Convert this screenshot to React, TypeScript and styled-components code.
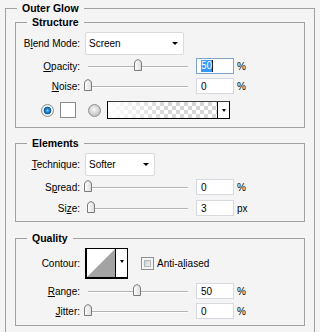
import React from 'react';
import styled, { createGlobalStyle } from 'styled-components';

const Global = createGlobalStyle`
  html, body { margin: 0; padding: 0; background: #f4f4f4; }
  body {
    font-family: "Liberation Sans", Arial, sans-serif;
    font-size: 10px;
    color: #000;
  }
  #root { padding: 2px 0 0 5px; }
`;

const Group = styled.fieldset<{ $outer?: boolean; $mt?: number; $pb?: number }>`
  box-sizing: border-box;
  width: ${(p) => (p.$outer ? '310px' : 'auto')};
  margin: ${(p) => p.$mt ?? 0}px ${(p) => (p.$outer ? 0 : 9)}px 0;
  padding: 0 0 ${(p) => p.$pb ?? 0}px;
  border: 1px solid #a0a0a0;
  min-width: 0;
`;

const Legend = styled.legend`
  margin-left: 11px;
  padding: 0 5px;
  font-weight: bold;
  font-size: 10.5px;
  line-height: 13px;
`;

const Row = styled.div<{ $h: number; $mt: number }>`
  display: flex;
  align-items: center;
  height: ${(p) => p.$h}px;
  margin-top: ${(p) => p.$mt}px;
`;

const Label = styled.span`
  flex: none;
  width: 64px;
  margin-right: 5px;
  text-align: right;
  white-space: nowrap;
`;

const U = styled.span`
  text-decoration: underline;
`;

const Select = styled.div<{ $w: number }>`
  box-sizing: border-box;
  width: ${(p) => p.$w}px;
  height: 23px;
  background: #fff;
  border: 1px solid #dadada;
  border-radius: 2px;
  display: flex;
  align-items: center;
  justify-content: space-between;
  padding: 0 5px 0 3px;
`;

const Arrow = styled.span<{ $w?: number }>`
  width: 0;
  height: 0;
  border-left: ${(p) => (p.$w ?? 6) / 2}px solid transparent;
  border-right: ${(p) => (p.$w ?? 6) / 2}px solid transparent;
  border-top: 3px solid #000;
`;

const SliderBox = styled.div`
  position: relative;
  flex: none;
  width: 107px;
  height: 16px;
  display: flex;
  align-items: center;
`;

const Track = styled.div`
  box-sizing: border-box;
  width: 100px;
  height: 2px;
  margin: 2px 0 0 3px;
  border-top: 1px solid #b4b4b4;
  background: #fdfdfd;
`;

const ThumbSvg = styled.svg`
  position: absolute;
  top: 1px;
`;

const Field = styled.div<{ $focus?: boolean }>`
  box-sizing: border-box;
  flex: none;
  width: 38px;
  height: 16px;
  margin-left: 4px;
  padding-left: 4px;
  background: #fff;
  border: 1px solid ${(p) => (p.$focus ? '#7da2ce' : '#d6d9df')};
  display: flex;
  align-items: center;
`;

const Selected = styled.span`
  background: #3399ff;
  color: #fff;
  line-height: 12px;
  border-right: 1px solid #1a1a1a;
`;

const Unit = styled.span`
  margin-left: 3px;
`;

const Radio = styled.span<{ $on?: boolean; $ml: number }>`
  box-sizing: border-box;
  flex: none;
  width: 13px;
  height: 13px;
  margin-left: ${(p) => p.$ml}px;
  border-radius: 50%;
  border: 1px solid #8f8f8f;
  background: ${(p) =>
    p.$on
      ? 'radial-gradient(circle at 50% 50%, #8fd4fa 0, #2a8fd6 1.5px, #0d5596 3.5px, #f2f2f2 4.2px, #dedede 100%)'
      : 'radial-gradient(circle at 45% 40%, #fbfbfb 0, #e0e0e0 3px, #c6c6c6 6px)'};
`;

const Swatch = styled.span<{ $ml: number }>`
  box-sizing: border-box;
  flex: none;
  width: 16px;
  height: 16px;
  margin-left: ${(p) => p.$ml}px;
  background: #fff;
  border: 1px solid #8a8a8a;
`;

const GradientBox = styled.div<{ $ml: number }>`
  box-sizing: border-box;
  flex: none;
  display: flex;
  width: 123px;
  height: 18px;
  margin-left: ${(p) => p.$ml}px;
  border: 1px solid #000;
  border-top-color: #404040;
`;

const GradientFill = styled.div`
  flex: 1;
  background:
    linear-gradient(to right, #fff 0%, rgba(255, 255, 255, 0) 55%),
    repeating-conic-gradient(#d6d6d6 0 25%, #fff 0 50%) 0 0 / 8px 8px;
`;

const MiniDrop = styled.div<{ $pb?: number }>`
  box-sizing: border-box;
  flex: none;
  width: 12px;
  background: #fff;
  border-left: 1px solid #000;
  display: flex;
  align-items: center;
  justify-content: center;
  padding-bottom: ${(p) => p.$pb ?? 0}px;
`;

const ContourBox = styled.div`
  box-sizing: border-box;
  flex: none;
  display: flex;
  width: 43px;
  height: 31px;
  border: 1px solid #000;
  border-left-width: 2px;
  border-bottom-width: 2px;
`;

const CheckBox = styled.span<{ $ml: number }>`
  box-sizing: border-box;
  flex: none;
  width: 13px;
  height: 13px;
  margin-left: ${(p) => p.$ml}px;
  padding: 2px;
  border: 1px solid #8e8f8f;
  background: #f4f4f4;
`;

const CheckInner = styled.span`
  display: block;
  box-sizing: border-box;
  width: 7px;
  height: 7px;
  border: 1px solid #b3b6bb;
  background: linear-gradient(135deg, #c8cbd0, #f3f3f3);
`;

const CheckText = styled.span`
  margin-left: 3px;
`;

const Slider: React.FC<{ value: number }> = ({ value }) => (
  <SliderBox>
    <Track />
    <ThumbSvg width="8" height="12" viewBox="0 0 8 12" style={{ left: value - 1 }}>
      <defs>
        <linearGradient id="thumbFill" x1="0" x2="1" y1="0" y2="0">
          <stop offset="0" stopColor="#ffffff" />
          <stop offset="1" stopColor="#dcdcdc" />
        </linearGradient>
      </defs>
      <path
        d="M0.5 11.5 V4 Q0.5 1.5 4 0.5 Q7.5 1.5 7.5 4 V11.5 Z"
        fill="url(#thumbFill)"
        stroke="#7a7a7a"
      />
    </ThumbSvg>
  </SliderBox>
);

const SliderRow: React.FC<{
  label: React.ReactNode;
  value: number;
  text: string;
  unit: string;
  mt: number;
  focus?: boolean;
}> = ({ label, value, text, unit, mt, focus }) => (
  <Row $h={16} $mt={mt}>
    <Label>{label}</Label>
    <Slider value={value} />
    <Field $focus={focus}>{focus ? <Selected>{text}</Selected> : text}</Field>
    <Unit>{unit}</Unit>
  </Row>
);

export default function App() {
  return (
    <>
      <Global />
      <Group $outer $pb={20}>
        <Legend>Outer Glow</Legend>

        <Group $mt={1} $pb={8}>
          <Legend>Structure</Legend>
          <Row $h={23} $mt={3}>
            <Label>
              B<U>l</U>end Mode:
            </Label>
            <Select $w={99}>
              <span>Screen</span>
              <Arrow />
            </Select>
          </Row>
          <SliderRow
            label={
              <>
                <U>O</U>pacity:
              </>
            }
            value={50}
            text="50"
            unit="%"
            mt={3}
            focus
          />
          <SliderRow
            label={
              <>
                <U>N</U>oise:
              </>
            }
            value={0}
            text="0"
            unit="%"
            mt={4}
          />
          <Row $h={18} $mt={7}>
            <Radio $on $ml={25} />
            <Swatch $ml={6} />
            <Radio $ml={12} />
            <GradientBox $ml={6}>
              <GradientFill />
              <MiniDrop>
                <Arrow $w={5} />
              </MiniDrop>
            </GradientBox>
          </Row>
        </Group>

        <Group $mt={9} $pb={5}>
          <Legend>Elements</Legend>
          <Row $h={23} $mt={3}>
            <Label>
              <U>T</U>echnique:
            </Label>
            <Select $w={70}>
              <span>Softer</span>
              <Arrow />
            </Select>
          </Row>
          <SliderRow
            label={
              <>
                S<U>p</U>read:
              </>
            }
            value={0}
            text="0"
            unit="%"
            mt={3}
          />
          <SliderRow
            label={
              <>
                Si<U>z</U>e:
              </>
            }
            value={3}
            text="3"
            unit="px"
            mt={5}
          />
        </Group>

        <Group $mt={10} $pb={6}>
          <Legend>Quality</Legend>
          <Row $h={31} $mt={3}>
            <Label>Contour:</Label>
            <ContourBox>
              <svg width="28" height="28" viewBox="0 0 28 28">
                <rect width="28" height="28" fill="#fff" />
                <polygon points="0,28 28,0 28,28" fill="#a3a3a3" />
              </svg>
              <MiniDrop $pb={3}>
                <Arrow $w={5} />
              </MiniDrop>
            </ContourBox>
            <CheckBox $ml={13}>
              <CheckInner />
            </CheckBox>
            <CheckText>
              Anti-a<U>l</U>iased
            </CheckText>
          </Row>
          <SliderRow
            label={
              <>
                <U>R</U>ange:
              </>
            }
            value={49}
            text="50"
            unit="%"
            mt={4}
          />
          <SliderRow
            label={
              <>
                <U>J</U>itter:
              </>
            }
            value={0}
            text="0"
            unit="%"
            mt={4}
          />
        </Group>
      </Group>
    </>
  );
}
